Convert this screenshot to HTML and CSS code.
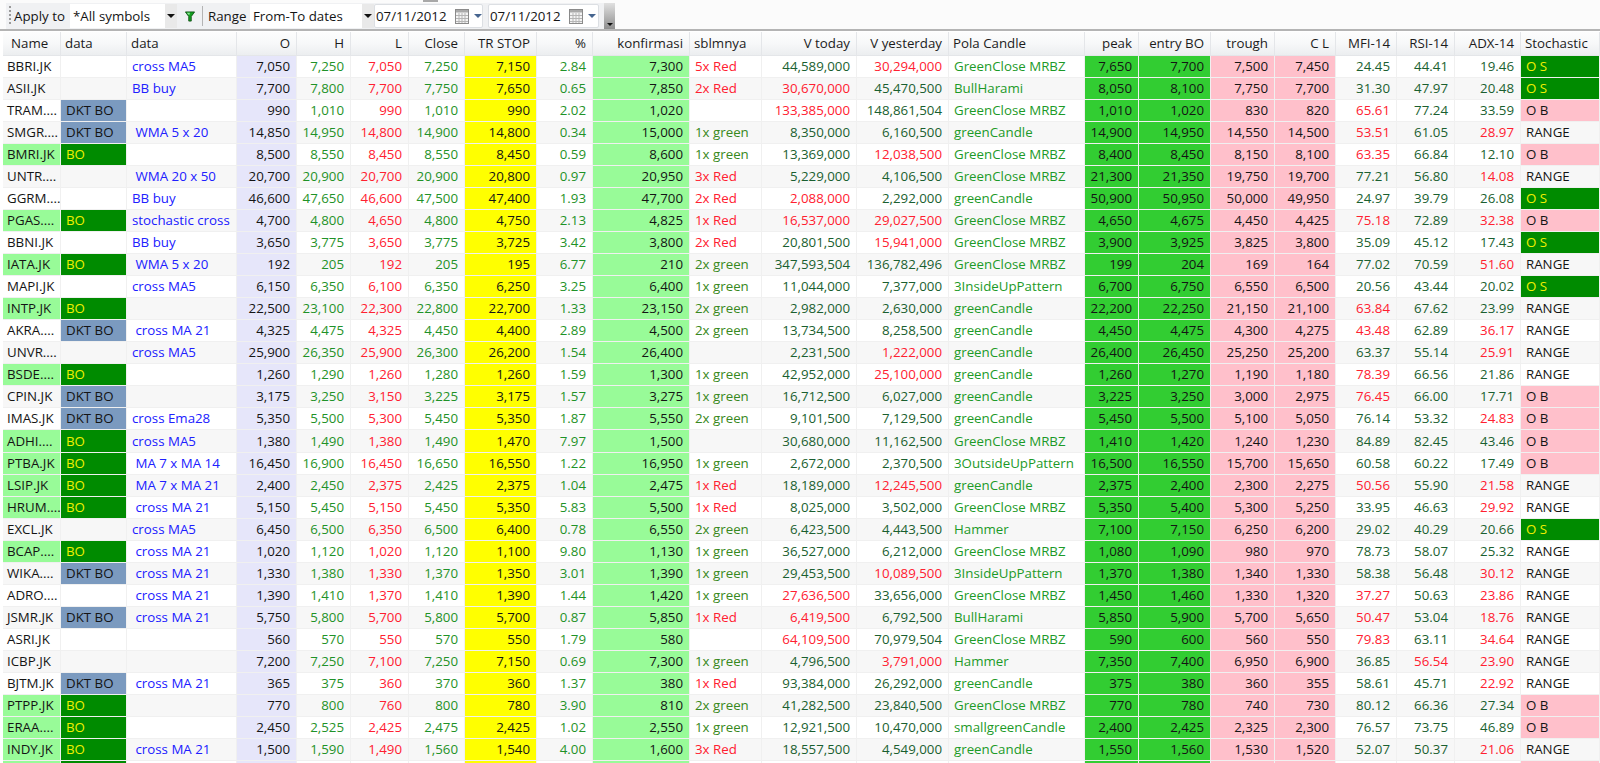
FILE: index.html
```html
<!DOCTYPE html>
<html lang="en">
<head>
    <meta name="viewport" content="width=device-width, initial-scale=1.0">
    <link rel="stylesheet" href="styles.css">
    <title>Scan results</title>
</head>

<body>
    <div class="topnotch"></div>
    <div class="toolbar">
        <div class="tools">
            <span class="grip"></span>
            <span class="label apply">Apply to</span>
            <span class="combo symbols">*All symbols</span>
            <span class="drop"><i class="arrow"></i></span>
            <span class="filter">
                <svg width="10" height="13" viewBox="0 0 12 14"><path d="M0.5 1.5 H11.5 L7.5 7 V12.5 H4.5 V7 Z" fill="#14a020" stroke="#0a4a10"/><path d="M2 2.5 H6 L5 5.5 Z" fill="#8fe89a"/></svg>
            </span>
            <span class="sep"></span>
            <span class="label range">Range</span>
            <span class="combo dates">From-To dates</span>
            <span class="drop"><i class="arrow"></i></span>
            <span class="datebox first">07/11/2012
                <svg class="cal" width="15" height="15" viewBox="0 0 15 15"><rect x="0.5" y="0.5" width="13" height="14" fill="#f4f4f4" stroke="#8a8a8a"/><rect x="1" y="1" width="12" height="2.5" fill="#a9a9a9"/><path d="M1 6.5 H13 M1 9.5 H13 M1 12.5 H13 M4 4 V14 M7 4 V14 M10 4 V14" stroke="#b5b5b5"/></svg>
                <i class="arrow blue"></i>
            </span>
            <span class="datebox">07/11/2012
                <svg class="cal" width="15" height="15" viewBox="0 0 15 15"><rect x="0.5" y="0.5" width="13" height="14" fill="#f4f4f4" stroke="#8a8a8a"/><rect x="1" y="1" width="12" height="2.5" fill="#a9a9a9"/><path d="M1 6.5 H13 M1 9.5 H13 M1 12.5 H13 M4 4 V14 M7 4 V14 M10 4 V14" stroke="#b5b5b5"/></svg>
                <i class="arrow blue"></i>
            </span>
        </div>
        <span class="more"><i></i></span>
    </div>

    <table class="grid">
        <colgroup>
            <col class="w58"><col class="w66"><col class="w110"><col class="w60"><col class="w54"><col class="w58"><col class="w56"><col class="w72"><col class="w56"><col class="w97"><col class="w72"><col class="w95"><col class="w92"><col class="w136"><col class="w54"><col class="w72"><col class="w64"><col class="w61"><col class="w61"><col class="w58"><col class="w66"><col class="w79">
        </colgroup>
        <thead>
            <tr><th>Name</th><th>data</th><th>data</th><th>O</th><th>H</th><th>L</th><th>Close</th><th>TR STOP</th><th>%</th><th>konfirmasi</th><th>sblmnya</th><th>V today</th><th>V yesterday</th><th>Pola Candle</th><th>peak</th><th>entry BO</th><th>trough</th><th>C L</th><th>MFI-14</th><th>RSI-14</th><th>ADX-14</th><th>Stochastic</th></tr>
        </thead>
        <tbody>
            <tr><td>BBRI.JK</td><td></td><td>cross MA5</td><td>7,050</td><td>7,250</td><td>7,050</td><td>7,250</td><td>7,150</td><td>2.84</td><td>7,300</td><td class="r">5x Red</td><td>44,589,000</td><td class="r">30,294,000</td><td>GreenClose MRBZ</td><td>7,650</td><td>7,700</td><td>7,500</td><td>7,450</td><td>24.45</td><td>44.41</td><td>19.46</td><td class="os">O S</td></tr>
            <tr><td>ASII.JK</td><td></td><td>BB buy</td><td>7,700</td><td>7,800</td><td>7,700</td><td>7,750</td><td>7,650</td><td>0.65</td><td>7,850</td><td class="r">2x Red</td><td class="r">30,670,000</td><td>45,470,500</td><td>BullHarami</td><td>8,050</td><td>8,100</td><td>7,750</td><td>7,700</td><td>31.30</td><td>47.97</td><td>20.48</td><td class="os">O S</td></tr>
            <tr><td>TRAM....</td><td class="dkt">DKT BO</td><td></td><td>990</td><td>1,010</td><td>990</td><td>1,010</td><td>990</td><td>2.02</td><td>1,020</td><td></td><td class="r">133,385,000</td><td>148,861,504</td><td>GreenClose MRBZ</td><td>1,010</td><td>1,020</td><td>830</td><td>820</td><td class="r">65.61</td><td>77.24</td><td>33.59</td><td class="ob">O B</td></tr>
            <tr><td>SMGR....</td><td class="dkt">DKT BO</td><td> WMA 5 x 20</td><td>14,850</td><td>14,950</td><td>14,800</td><td>14,900</td><td>14,800</td><td>0.34</td><td>15,000</td><td>1x green</td><td>8,350,000</td><td>6,160,500</td><td>greenCandle</td><td>14,900</td><td>14,950</td><td>14,550</td><td>14,500</td><td class="r">53.51</td><td>61.05</td><td class="r">28.97</td><td>RANGE</td></tr>
            <tr class="hit"><td>BMRI.JK</td><td class="bo">BO</td><td></td><td>8,500</td><td>8,550</td><td>8,450</td><td>8,550</td><td>8,450</td><td>0.59</td><td>8,600</td><td>1x green</td><td>13,369,000</td><td class="r">12,038,500</td><td>GreenClose MRBZ</td><td>8,400</td><td>8,450</td><td>8,150</td><td>8,100</td><td class="r">63.35</td><td>66.84</td><td>12.10</td><td class="ob">O B</td></tr>
            <tr><td>UNTR....</td><td></td><td> WMA 20 x 50</td><td>20,700</td><td>20,900</td><td>20,700</td><td>20,900</td><td>20,800</td><td>0.97</td><td>20,950</td><td class="r">3x Red</td><td>5,229,000</td><td>4,106,500</td><td>GreenClose MRBZ</td><td>21,300</td><td>21,350</td><td>19,750</td><td>19,700</td><td>77.21</td><td>56.80</td><td class="r">14.08</td><td>RANGE</td></tr>
            <tr><td>GGRM....</td><td></td><td>BB buy</td><td>46,600</td><td>47,650</td><td>46,600</td><td>47,500</td><td>47,400</td><td>1.93</td><td>47,700</td><td class="r">2x Red</td><td class="r">2,088,000</td><td>2,292,000</td><td>greenCandle</td><td>50,900</td><td>50,950</td><td>50,000</td><td>49,950</td><td>24.97</td><td>39.79</td><td>26.08</td><td class="os">O S</td></tr>
            <tr class="hit"><td>PGAS....</td><td class="bo">BO</td><td>stochastic cross</td><td>4,700</td><td>4,800</td><td>4,650</td><td>4,800</td><td>4,750</td><td>2.13</td><td>4,825</td><td class="r">1x Red</td><td class="r">16,537,000</td><td class="r">29,027,500</td><td>GreenClose MRBZ</td><td>4,650</td><td>4,675</td><td>4,450</td><td>4,425</td><td class="r">75.18</td><td>72.89</td><td class="r">32.38</td><td class="ob">O B</td></tr>
            <tr><td>BBNI.JK</td><td></td><td>BB buy</td><td>3,650</td><td>3,775</td><td>3,650</td><td>3,775</td><td>3,725</td><td>3.42</td><td>3,800</td><td class="r">2x Red</td><td>20,801,500</td><td class="r">15,941,000</td><td>GreenClose MRBZ</td><td>3,900</td><td>3,925</td><td>3,825</td><td>3,800</td><td>35.09</td><td>45.12</td><td>17.43</td><td class="os">O S</td></tr>
            <tr class="hit"><td>IATA.JK</td><td class="bo">BO</td><td> WMA 5 x 20</td><td>192</td><td>205</td><td>192</td><td>205</td><td>195</td><td>6.77</td><td>210</td><td>2x green</td><td>347,593,504</td><td>136,782,496</td><td>GreenClose MRBZ</td><td>199</td><td>204</td><td>169</td><td>164</td><td>77.02</td><td>70.59</td><td class="r">51.60</td><td>RANGE</td></tr>
            <tr><td>MAPI.JK</td><td></td><td>cross MA5</td><td>6,150</td><td>6,350</td><td>6,100</td><td>6,350</td><td>6,250</td><td>3.25</td><td>6,400</td><td>1x green</td><td>11,044,000</td><td>7,377,000</td><td>3InsideUpPattern</td><td>6,700</td><td>6,750</td><td>6,550</td><td>6,500</td><td>20.56</td><td>43.44</td><td>20.02</td><td class="os">O S</td></tr>
            <tr class="hit"><td>INTP.JK</td><td class="bo">BO</td><td></td><td>22,500</td><td>23,100</td><td>22,300</td><td>22,800</td><td>22,700</td><td>1.33</td><td>23,150</td><td>2x green</td><td>2,982,000</td><td>2,630,000</td><td>greenCandle</td><td>22,200</td><td>22,250</td><td>21,150</td><td>21,100</td><td class="r">63.84</td><td>67.62</td><td>23.99</td><td>RANGE</td></tr>
            <tr><td>AKRA....</td><td class="dkt">DKT BO</td><td> cross MA 21</td><td>4,325</td><td>4,475</td><td>4,325</td><td>4,450</td><td>4,400</td><td>2.89</td><td>4,500</td><td>2x green</td><td>13,734,500</td><td>8,258,500</td><td>greenCandle</td><td>4,450</td><td>4,475</td><td>4,300</td><td>4,275</td><td class="r">43.48</td><td>62.89</td><td class="r">36.17</td><td>RANGE</td></tr>
            <tr><td>UNVR....</td><td></td><td>cross MA5</td><td>25,900</td><td>26,350</td><td>25,900</td><td>26,300</td><td>26,200</td><td>1.54</td><td>26,400</td><td></td><td>2,231,500</td><td class="r">1,222,000</td><td>greenCandle</td><td>26,400</td><td>26,450</td><td>25,250</td><td>25,200</td><td>63.37</td><td>55.14</td><td class="r">25.91</td><td>RANGE</td></tr>
            <tr class="hit"><td>BSDE....</td><td class="bo">BO</td><td></td><td>1,260</td><td>1,290</td><td>1,260</td><td>1,280</td><td>1,260</td><td>1.59</td><td>1,300</td><td>1x green</td><td>42,952,000</td><td class="r">25,100,000</td><td>greenCandle</td><td>1,260</td><td>1,270</td><td>1,190</td><td>1,180</td><td class="r">78.39</td><td>66.56</td><td>21.86</td><td>RANGE</td></tr>
            <tr><td>CPIN.JK</td><td class="dkt">DKT BO</td><td></td><td>3,175</td><td>3,250</td><td>3,150</td><td>3,225</td><td>3,175</td><td>1.57</td><td>3,275</td><td>1x green</td><td>16,712,500</td><td>6,027,000</td><td>greenCandle</td><td>3,225</td><td>3,250</td><td>3,000</td><td>2,975</td><td class="r">76.45</td><td>66.00</td><td>17.71</td><td class="ob">O B</td></tr>
            <tr><td>IMAS.JK</td><td class="dkt">DKT BO</td><td>cross Ema28</td><td>5,350</td><td>5,500</td><td>5,300</td><td>5,450</td><td>5,350</td><td>1.87</td><td>5,550</td><td>2x green</td><td>9,101,500</td><td>7,129,500</td><td>greenCandle</td><td>5,450</td><td>5,500</td><td>5,100</td><td>5,050</td><td>76.14</td><td>53.32</td><td class="r">24.83</td><td class="ob">O B</td></tr>
            <tr class="hit"><td>ADHI....</td><td class="bo">BO</td><td>cross MA5</td><td>1,380</td><td>1,490</td><td>1,380</td><td>1,490</td><td>1,470</td><td>7.97</td><td>1,500</td><td></td><td>30,680,000</td><td>11,162,500</td><td>GreenClose MRBZ</td><td>1,410</td><td>1,420</td><td>1,240</td><td>1,230</td><td>84.89</td><td>82.45</td><td>43.46</td><td class="ob">O B</td></tr>
            <tr class="hit"><td>PTBA.JK</td><td class="bo">BO</td><td> MA 7 x MA 14</td><td>16,450</td><td>16,900</td><td>16,450</td><td>16,650</td><td>16,550</td><td>1.22</td><td>16,950</td><td>1x green</td><td>2,672,000</td><td>2,370,500</td><td>3OutsideUpPattern</td><td>16,500</td><td>16,550</td><td>15,700</td><td>15,650</td><td>60.58</td><td>60.22</td><td>17.49</td><td class="ob">O B</td></tr>
            <tr class="hit"><td>LSIP.JK</td><td class="bo">BO</td><td> MA 7 x MA 21</td><td>2,400</td><td>2,450</td><td>2,375</td><td>2,425</td><td>2,375</td><td>1.04</td><td>2,475</td><td class="r">1x Red</td><td>18,189,000</td><td class="r">12,245,500</td><td>greenCandle</td><td>2,375</td><td>2,400</td><td>2,300</td><td>2,275</td><td class="r">50.56</td><td>55.90</td><td class="r">21.58</td><td>RANGE</td></tr>
            <tr class="hit"><td>HRUM....</td><td class="bo">BO</td><td> cross MA 21</td><td>5,150</td><td>5,450</td><td>5,150</td><td>5,450</td><td>5,350</td><td>5.83</td><td>5,500</td><td class="r">1x Red</td><td>8,025,000</td><td>3,502,000</td><td>GreenClose MRBZ</td><td>5,350</td><td>5,400</td><td>5,300</td><td>5,250</td><td>33.95</td><td>46.63</td><td class="r">29.92</td><td>RANGE</td></tr>
            <tr><td>EXCL.JK</td><td></td><td>cross MA5</td><td>6,450</td><td>6,500</td><td>6,350</td><td>6,500</td><td>6,400</td><td>0.78</td><td>6,550</td><td>2x green</td><td>6,423,500</td><td>4,443,500</td><td>Hammer</td><td>7,100</td><td>7,150</td><td>6,250</td><td>6,200</td><td>29.02</td><td>40.29</td><td>20.66</td><td class="os">O S</td></tr>
            <tr class="hit"><td>BCAP....</td><td class="bo">BO</td><td> cross MA 21</td><td>1,020</td><td>1,120</td><td>1,020</td><td>1,120</td><td>1,100</td><td>9.80</td><td>1,130</td><td>1x green</td><td>36,527,000</td><td>6,212,000</td><td>GreenClose MRBZ</td><td>1,080</td><td>1,090</td><td>980</td><td>970</td><td>78.73</td><td>58.07</td><td>25.32</td><td>RANGE</td></tr>
            <tr><td>WIKA....</td><td class="dkt">DKT BO</td><td> cross MA 21</td><td>1,330</td><td>1,380</td><td>1,330</td><td>1,370</td><td>1,350</td><td>3.01</td><td>1,390</td><td>1x green</td><td>29,453,500</td><td class="r">10,089,500</td><td>3InsideUpPattern</td><td>1,370</td><td>1,380</td><td>1,340</td><td>1,330</td><td>58.38</td><td>56.48</td><td class="r">30.12</td><td>RANGE</td></tr>
            <tr><td>ADRO....</td><td></td><td> cross MA 21</td><td>1,390</td><td>1,410</td><td>1,370</td><td>1,410</td><td>1,390</td><td>1.44</td><td>1,420</td><td>1x green</td><td class="r">27,636,500</td><td>33,656,000</td><td>GreenClose MRBZ</td><td>1,450</td><td>1,460</td><td>1,330</td><td>1,320</td><td class="r">37.27</td><td>50.63</td><td class="r">23.86</td><td>RANGE</td></tr>
            <tr><td>JSMR.JK</td><td class="dkt">DKT BO</td><td> cross MA 21</td><td>5,750</td><td>5,800</td><td>5,700</td><td>5,800</td><td>5,700</td><td>0.87</td><td>5,850</td><td class="r">1x Red</td><td class="r">6,419,500</td><td>6,792,500</td><td>BullHarami</td><td>5,850</td><td>5,900</td><td>5,700</td><td>5,650</td><td class="r">50.47</td><td>53.04</td><td class="r">18.76</td><td>RANGE</td></tr>
            <tr><td>ASRI.JK</td><td></td><td></td><td>560</td><td>570</td><td>550</td><td>570</td><td>550</td><td>1.79</td><td>580</td><td></td><td class="r">64,109,500</td><td>70,979,504</td><td>GreenClose MRBZ</td><td>590</td><td>600</td><td>560</td><td>550</td><td class="r">79.83</td><td>63.11</td><td class="r">34.64</td><td>RANGE</td></tr>
            <tr><td>ICBP.JK</td><td></td><td></td><td>7,200</td><td>7,250</td><td>7,100</td><td>7,250</td><td>7,150</td><td>0.69</td><td>7,300</td><td>1x green</td><td>4,796,500</td><td class="r">3,791,000</td><td>Hammer</td><td>7,350</td><td>7,400</td><td>6,950</td><td>6,900</td><td>36.85</td><td class="r">56.54</td><td class="r">23.90</td><td>RANGE</td></tr>
            <tr><td>BJTM.JK</td><td class="dkt">DKT BO</td><td> cross MA 21</td><td>365</td><td>375</td><td>360</td><td>370</td><td>360</td><td>1.37</td><td>380</td><td class="r">1x Red</td><td>93,384,000</td><td>26,292,000</td><td>greenCandle</td><td>375</td><td>380</td><td>360</td><td>355</td><td>58.61</td><td>45.71</td><td class="r">22.92</td><td>RANGE</td></tr>
            <tr class="hit"><td>PTPP.JK</td><td class="bo">BO</td><td></td><td>770</td><td>800</td><td>760</td><td>800</td><td>780</td><td>3.90</td><td>810</td><td>2x green</td><td>41,282,500</td><td>23,840,500</td><td>GreenClose MRBZ</td><td>770</td><td>780</td><td>740</td><td>730</td><td>80.12</td><td>66.36</td><td>27.34</td><td class="ob">O B</td></tr>
            <tr class="hit"><td>ERAA....</td><td class="bo">BO</td><td></td><td>2,450</td><td>2,525</td><td>2,425</td><td>2,475</td><td>2,425</td><td>1.02</td><td>2,550</td><td>1x green</td><td>12,921,500</td><td>10,470,000</td><td>smallgreenCandle</td><td>2,400</td><td>2,425</td><td>2,325</td><td>2,300</td><td>76.57</td><td>73.75</td><td>46.89</td><td class="ob">O B</td></tr>
            <tr class="hit"><td>INDY.JK</td><td class="bo">BO</td><td> cross MA 21</td><td>1,500</td><td>1,590</td><td>1,490</td><td>1,560</td><td>1,540</td><td>4.00</td><td>1,600</td><td class="r">3x Red</td><td>18,557,500</td><td>4,549,000</td><td>greenCandle</td><td>1,550</td><td>1,560</td><td>1,530</td><td>1,520</td><td>52.07</td><td>50.37</td><td class="r">21.06</td><td>RANGE</td></tr>
            <tr class="hit"><td></td><td class="bo"></td><td></td><td></td><td></td><td></td><td></td><td></td><td></td><td></td><td></td><td></td><td></td><td></td><td></td><td></td><td></td><td></td><td></td><td></td><td></td><td class="ob"></td></tr>
        </tbody>
    </table>
</body>
</html>
```

FILE: styles.css
```css
html, body {
    height: 100%;
    overflow: hidden;
}

body {
    margin: 0px;
    padding-left: 3px;
    background-color: white;
    font-family: "Open Sans", "Noto Sans", sans-serif;
    font-size: 13.3px;
    color: #141414;
    position: relative;
}

.topnotch {
    position: absolute;
    top: 0px;
    left: 423px;
    width: 15px;
    height: 2px;
    background-color: #a8a8a8;
}

/* toolbar */
.toolbar {
    display: flex;
    align-items: stretch;
    height: 26px;
    margin-left: -3px;
    padding-top: 3px;
    padding-left: 6px;
    background-color: #fbfbfb;
    border-bottom: 2px solid #b4b4b4;
}

.tools {
    display: flex;
    align-items: center;
    width: 598px;
    background-color: #f0f1f3;
}

.grip {
    width: 2px;
    height: 20px;
    margin-left: 3px;
    margin-right: 3px;
    background-image: linear-gradient(#9a9a9a 50%, transparent 50%);
    background-size: 2px 4px;
}

.label {
    white-space: nowrap;
}

.apply {
    width: 56px;
}

.range {
    width: 42px;
}

.combo {
    display: flex;
    align-items: center;
    align-self: stretch;
    margin: 1px 0px;
    padding-left: 3px;
    background-color: white;
    white-space: nowrap;
}

.symbols {
    width: 92px;
}

.dates {
    width: 109px;
}

.drop {
    display: flex;
    align-items: center;
    justify-content: center;
    width: 12px;
    align-self: stretch;
    margin: 1px 0px;
    background-color: #e9e9e9;
}

.arrow {
    display: block;
    width: 0px;
    height: 0px;
    border-left: 4px solid transparent;
    border-right: 4px solid transparent;
    border-top: 4px solid #111;
}

.arrow.blue {
    border-top-color: #46658f;
}

.filter {
    display: flex;
    align-items: center;
    justify-content: center;
    width: 25px;
}

.sep {
    width: 1px;
    height: 20px;
    background-color: #b4b4b4;
    margin-right: 5px;
}

.datebox {
    display: flex;
    align-items: center;
    align-self: stretch;
    box-sizing: border-box;
    width: 111px;
    margin: 1px 0px 1px 5px;
    padding-left: 1px;
    background-color: white;
    border: 1px solid #dcdfe3;
    border-radius: 2px;
    white-space: nowrap;
}

.datebox.first {
    width: 109px;
    margin-left: 0px;
}

.cal {
    margin-left: 8px;
    margin-right: 4px;
}

.more {
    display: flex;
    align-items: flex-end;
    justify-content: center;
    width: 11px;
    background-image: linear-gradient(#e0e0e0, #8e8e8e);
}

.more i {
    display: block;
    width: 0px;
    height: 0px;
    margin-bottom: 3px;
    border-left: 3px solid transparent;
    border-right: 3px solid transparent;
    border-top: 3px solid #111;
}

/* grid */
.grid {
    table-layout: fixed;
    width: 1597px;
    margin-top: 1px;
    border-collapse: separate;
    border-spacing: 0px;
}

.w54 { width: 54px; }
.w56 { width: 56px; }
.w58 { width: 58px; }
.w60 { width: 60px; }
.w61 { width: 61px; }
.w64 { width: 64px; }
.w66 { width: 66px; }
.w72 { width: 72px; }
.w79 { width: 79px; }
.w92 { width: 92px; }
.w95 { width: 95px; }
.w97 { width: 97px; }
.w110 { width: 110px; }
.w136 { width: 136px; }

.grid th {
    box-sizing: border-box;
    height: 23.7px;
    padding: 0px 6px 0px 4px;
    font-weight: normal;
    text-align: right;
    color: #1c1c1c;
    white-space: nowrap;
    overflow: hidden;
    background-image: linear-gradient(#fdfdfd, #f7f8f9 50%, #eceef0);
    border-right: 1px solid #e4e6e9;
    border-bottom: 1px solid #e4e6e9;
}

.grid td {
    box-sizing: border-box;
    height: 22.06px;
    padding: 0px 6px 1px 5px;
    text-align: right;
    white-space: pre;
    overflow: hidden;
    border-right: 1px solid #f0f0f0;
    border-bottom: 1px solid #f0f0f0;
}

.grid tbody tr:nth-child(even) td {
    background-color: #f7f7f7;
}

.grid th:nth-child(-n+3),
.grid th:nth-child(11),
.grid th:nth-child(14),
.grid th:nth-child(22),
.grid td:nth-child(-n+3),
.grid td:nth-child(11),
.grid td:nth-child(14),
.grid td:nth-child(22) {
    text-align: left;
}

.grid th:first-child {
    padding-left: 8px;
}

.grid td:first-child {
    padding-left: 4px;
    padding-right: 0px;
}

.grid td:nth-child(3) {
    color: #2020ff;
}

.grid td:nth-child(5),
.grid td:nth-child(7),
.grid td:nth-child(9) {
    color: #1f9228;
}

.grid td:nth-child(6) {
    color: #ff2030;
}

.grid td:nth-child(11) {
    color: #388820;
}

.grid td:nth-child(12),
.grid td:nth-child(13),
.grid td:nth-child(19),
.grid td:nth-child(20),
.grid td:nth-child(21) {
    color: #1a5f30;
}

.grid td:nth-child(14) {
    color: #1c9a28;
}

.grid tbody tr td:nth-child(4) {
    background-color: #e6e6fa;
}

.grid tbody tr td:nth-child(8) {
    background-color: #ffff00;
}

.grid tbody tr td:nth-child(10) {
    background-color: #98fb98;
}

.grid tbody tr td:nth-child(15),
.grid tbody tr td:nth-child(16) {
    background-color: #32cd32;
}

.grid tbody tr td:nth-child(17),
.grid tbody tr td:nth-child(18) {
    background-color: #ffc0cb;
}

.grid tbody tr.hit td:first-child {
    background-color: #98fb98;
}

.grid tbody tr td.r {
    color: #ff2030;
}

.grid tbody tr td.bo {
    background-color: #008b00;
    color: #f0f000;
}

.grid tbody tr td.dkt {
    background-color: #7b9abf;
}

.grid tbody tr td.os {
    background-color: #008b00;
    color: #f0f000;
}

.grid tbody tr td.ob {
    background-color: #ffc0cb;
}
```
